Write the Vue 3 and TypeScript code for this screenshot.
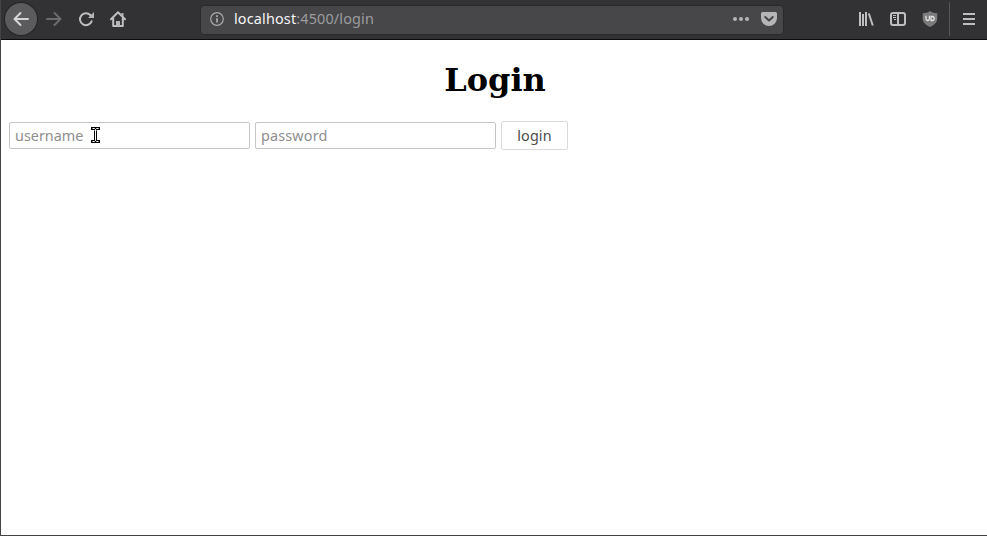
<script setup lang="ts">
import { ref } from 'vue'

const username = ref('')
const password = ref('')
</script>

<template>
  <div class="window">
    <header class="toolbar">
      <nav class="navigation">
        <button class="tool back" aria-label="Back">
          <svg width="16" height="16" viewBox="0 0 16 16"><path d="M15 8H2M7.5 2 1.5 8l6 6" /></svg>
        </button>
        <button class="tool forward" aria-label="Forward">
          <svg width="16" height="16" viewBox="0 0 16 16"><path d="M1 8h13M8.5 2l6 6-6 6" /></svg>
        </button>
        <button class="tool" aria-label="Reload">
          <svg width="16" height="16" viewBox="0 0 16 16"><path d="M13.6 10.3A6 6 0 1 1 12.3 4L13.8 5.5" /><path class="solid" d="M16 1v6h-6z" /></svg>
        </button>
        <button class="tool" aria-label="Home">
          <svg width="16" height="16" viewBox="0 0 16 16"><path d="M1 8.2 8 1.3l7 6.9M3.2 7v8h9.600V7" /><path class="solid" d="M6 15v-5h4v5zM11.500 2h2v4l-2-2z" /></svg>
        </button>
      </nav>
      <div class="address">
        <svg width="14" height="14" viewBox="0 0 14 14"><circle cx="7" cy="7" r="6.3" /><path class="info" d="M7 6.2v4.2M7 3.3v1.8" /></svg>
        <div class="url"><span class="host">localhost</span>:4500/login</div>
        <svg class="dots" width="16" height="16" viewBox="0 0 16 16"><circle class="solid" cx="2" cy="8" r="2" /><circle class="solid" cx="8" cy="8" r="2" /><circle class="solid" cx="14" cy="8" r="2" /></svg>
        <svg class="pocket" width="16" height="16" viewBox="0 0 16 16"><path class="solid" d="M1.5 1h13A1.500 1.500 0 0 1 16 2.500V7A8 8 0 0 1 0 7V2.500A1.500 1.500 0 0 1 1.500 1z" /><path class="chevron" d="m4.200 6 3.800 3.600L11.800 6" /></svg>
      </div>
      <div class="extras">
        <button class="tool library" aria-label="Library">
          <svg width="16" height="16" viewBox="0 0 16 16"><path d="M2 1v14M5 3v12M8 1v14M10.800 2.500l4 12" /></svg>
        </button>
        <button class="tool" aria-label="Sidebar">
          <svg width="16" height="16" viewBox="0 0 16 16"><rect x="1" y="2" width="14" height="12" rx="2" /><path d="M8 2v12" /><path class="fine" d="M3 4.500h3M3 6.500h3M4 8.500h2" /></svg>
        </button>
        <button class="tool" aria-label="Content blocker">
          <svg width="16" height="16" viewBox="0 0 16 16"><path class="shield" d="M8 0c2 1.500 4.500 2.200 7.300 2.300v5C15.300 11.500 12 14.300 8 16 4 14.300.7 11.500.7 7.300v-5C3.500 2.200 6 1.500 8 0z" /><path class="badge" d="M4 5.200v2.500q0 1.800 1.700 1.800t1.700-1.800V5.200M9 5.500h1.200a2 2 0 0 1 0 4H9z" /></svg>
        </button>
        <span class="divider"></span>
        <button class="tool menu" aria-label="Menu">
          <svg width="16" height="16" viewBox="0 0 16 16"><path d="M2 3h12M2 8h12M2 13h12" /></svg>
        </button>
      </div>
    </header>
    <main class="page">
      <h1>Login</h1>
      <form @submit.prevent>
        <input v-model="username" type="text" placeholder="username" />
        <input v-model="password" class="password" type="password" placeholder="password" />
        <button class="submit">login</button>
      </form>
      <svg class="cursor" width="9" height="18" viewBox="0 0 9 18"><path class="halo" d="M1.500 2.500h2l1 1 1-1h2M4.500 3.500v11M1.500 15.500h2l1-1 1 1h2" /><path class="beam" d="M1.500 2.500h2l1 1 1-1h2M4.500 3.500v11M1.500 15.500h2l1-1 1 1h2" /></svg>
    </main>
  </div>
</template>

<style>
body { margin: 0; }
</style>

<style scoped>
.window {
  box-sizing: border-box;
  height: 536px;
  display: flex;
  flex-direction: column;
  border-left: 1px solid #454346;
  border-bottom: 1px solid #454346;
  background: #fff;
  font-family: "Noto Sans", sans-serif;
  overflow: hidden;
}
.toolbar {
  box-sizing: border-box;
  height: 40px;
  flex: none;
  display: flex;
  align-items: center;
  padding-bottom: 1px;
  background: #323234;
  border-bottom: 1px solid #0c0c0d;
}
svg { display: block; flex: none; fill: none; stroke: #bebebe; stroke-width: 2; }
.solid { fill: #b5b5b7; stroke: none; }
.navigation { display: flex; align-items: center; width: 199px; flex: none; padding-left: 4px; box-sizing: border-box; }
.tool {
  width: 32px;
  height: 32px;
  padding: 0;
  display: flex;
  align-items: center;
  justify-content: center;
  border: 0;
  background: none;
}
.tool svg path { stroke-linejoin: round; stroke-linecap: round; }
.back { background: #5b5b5d; border-radius: 50%; box-shadow: 0 0 0 1px #252527; }
.back svg { stroke: #d5d5d5; }
.forward { margin-left: 1px; }
.forward svg { stroke: #6c6c6c; }
.address {
  box-sizing: border-box;
  width: 584px;
  height: 30px;
  flex: none;
  display: flex;
  align-items: center;
  padding: 0 6px 1px 9px;
  border: 1px solid #29292b;
  border-radius: 4px;
  background: #474749;
  margin-top: 1px;
}
.address svg { stroke: #a9a9ab; stroke-width: 1.2; }
.address .info { stroke-width: 1.8; }
.url { flex: 1; padding-left: 10px; font-size: 14.4px; line-height: 20px; letter-spacing: 0.16px; color: #9c9c9e; }
.host { color: #f5f5f6; }
.dots { margin-right: 12px; }
.address .chevron { stroke: #474749; stroke-width: 2; stroke-linecap: round; stroke-linejoin: round; }
.extras { display: flex; align-items: center; margin-left: auto; padding-right: 2px; }
.tool.library path { stroke-linecap: butt; }
.extras .fine { stroke-width: 1; stroke-linecap: butt; }
.tool svg .shield { fill: #7b7b7c; stroke: none; }
.tool svg .badge { stroke: #e2e2e2; stroke-width: 1.3; }
.divider { width: 1px; height: 34px; margin: 0 3px; background: #555557; }
.menu svg path { stroke-linecap: butt; }
.page { position: relative; padding: 21px 8px 0; }
h1 {
  margin: 0 0 21px;
  padding-left: 2px;
  text-align: center;
  font: bold 32px/39px "DejaVu Serif", serif;
  color: #000;
}
form { display: flex; align-items: center; gap: 5px; }
input {
  box-sizing: border-box;
  width: 241px;
  height: 27px;
  padding: 0 5px;
  border: 1px solid #c5c5c5;
  border-radius: 2px;
  background: #fff;
  font: 14.4px "Noto Sans", sans-serif;
  color: #333;
  outline: none;
}
input::placeholder { color: #8e8e8e; opacity: 1; }
.password { letter-spacing: 0.15px; }
.submit {
  box-sizing: border-box;
  width: 67px;
  height: 29px;
  padding: 0;
  border: 1px solid #dadada;
  border-radius: 2px;
  background: #fff;
  font: 14.4px "Noto Sans", sans-serif;
  letter-spacing: 0.1px;
  color: #4c4c4c;
}
.cursor { position: absolute; left: 90px; top: 86px; }
.cursor .halo { stroke: #000; stroke-width: 3; stroke-linecap: square; }
.cursor .beam { stroke: #fff; stroke-width: 1; }
</style>
